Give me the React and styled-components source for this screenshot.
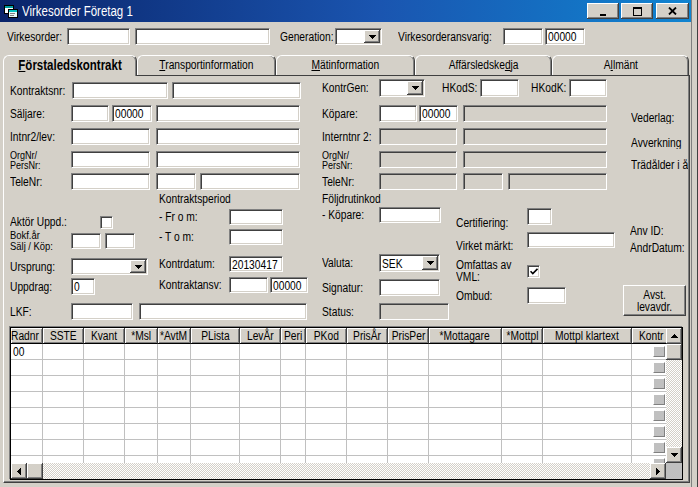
import React from "react";
import styled, { createGlobalStyle } from "styled-components";

const FONT = `"Liberation Sans", Arial, sans-serif`;

const GlobalStyle = createGlobalStyle`
  html, body {
    margin: 0;
    padding: 0;
    background: #d4d0c8;
  }
  body {
    font-family: ${FONT};
    font-size: 12.5px;
    color: #000;
  }
`;

const raised = `
  background: #d4d0c8;
  box-shadow: inset -1px -1px 0 #404040, inset 1px 1px 0 #fff,
    inset -2px -2px 0 #808080, inset 2px 2px 0 #d4d0c8;
`;

// the screen font is a narrow sans, so the text is squeezed horizontally
const Txt = styled.span`
  display: inline-block;
  transform: scaleX(0.82);
  transform-origin: ${(p) => p.$origin || "left"} center;
  white-space: pre;
`;

const Screen = styled.div`
  width: 698px;
  height: 487px;
  display: flex;
  overflow: hidden;
`;

const Window = styled.div`
  width: 691px;
  flex: none;
  border-right: 1px solid #808080;
  display: flex;
  flex-direction: column;
`;

const FrameEdge = styled.div`
  flex: 1;
  border-right: 1px solid #404040;
`;

const TitleBar = styled.div`
  height: 22px;
  flex: none;
  display: flex;
  align-items: center;
  padding: 0 2px 0 3px;
  background: linear-gradient(to right, #0a246a 0%, #1a55b0 55%, #1084d0 100%);
  color: #fff;
  font-size: 14px;
`;

const TitleText = styled.div`
  margin-left: 3px;
  flex: 1;
  white-space: nowrap;
`;

const TitleBtn = styled.div`
  box-sizing: border-box;
  width: ${(p) => p.$w}px;
  height: 16px;
  margin-left: ${(p) => p.$ml || 0}px;
  ${raised}
  display: flex;
  align-items: center;
  justify-content: center;
`;

const MinGlyph = styled.div`
  width: 6px;
  height: 2px;
  background: #000;
  margin-top: 7px;
`;

const MaxGlyph = styled.div`
  box-sizing: border-box;
  width: 9px;
  height: 9px;
  border: 1px solid #000;
  border-top-width: 2px;
`;

const TopBar = styled.div`
  height: 29px;
  flex: none;
  display: flex;
  align-items: center;
  padding-left: 7px;
`;

const TabRow = styled.div`
  position: relative;
  z-index: 1;
  height: 20px;
  margin-top: 4px;
  flex: none;
  display: flex;
  align-items: flex-end;
  padding-left: 3px;
`;

const Tab = styled.div`
  box-sizing: border-box;
  flex: none;
  width: ${(p) => p.$w}px;
  height: ${(p) => (p.$active ? 21 : 20)}px;
  margin-bottom: ${(p) => (p.$active ? -1 : 0)}px;
  border-top: 1px solid #fff;
  border-left: 1px solid #fff;
  border-right: 1px solid #404040;
  border-radius: 6px 6px 0 0;
  box-shadow: inset -1px 0 0 #808080;
  background: #d4d0c8;
  display: flex;
  align-items: center;
  justify-content: center;
  padding-bottom: ${(p) => (p.$active ? 2 : 1)}px;
  font-size: ${(p) => (p.$active ? 14 : 12.5)}px;
  font-weight: ${(p) => (p.$active ? 700 : 400)};
  white-space: nowrap;
`;

const Panel = styled.div`
  flex: 1;
  margin: 0 1px 4px 3px;
  border-top: 1px solid #404040;
  border-left: 1px solid #fff;
  border-right: 1px solid #404040;
  border-bottom: 1px solid #404040;
  box-shadow: inset -1px -1px 0 #808080;
  padding: 3px 0 0 6px;
  display: flex;
  flex-direction: column;
`;

const Form = styled.div`
  display: flex;
  height: 241px;
  flex: none;
`;

const Area = styled.div`
  width: ${(p) => p.$w}px;
  flex: none;
  display: flex;
  flex-direction: column;
  overflow: hidden;
`;

const Lower = styled.div`
  display: flex;
`;

const Col = styled.div`
  width: ${(p) => p.$w}px;
  flex: none;
  display: flex;
  flex-direction: column;
`;

const Row = styled.div`
  display: flex;
  align-items: center;
  flex: none;
  height: ${(p) => p.$h || 17}px;
  margin-top: ${(p) => (p.$mt === undefined ? 6 : p.$mt)}px;
`;

const LabelBox = styled.div`
  flex: none;
  width: ${(p) => (p.$w ? `${p.$w}px` : "auto")};
  margin-left: ${(p) => p.$ml || 0}px;
  padding-top: ${(p) => p.$pt || 0}px;
  font-size: ${(p) => p.$fs || 12.5}px;
  line-height: ${(p) => p.$lh || 14}px;
  white-space: pre;
  overflow: hidden;
`;

const Label = ({ children, ...rest }) => (
  <LabelBox {...rest}>
    <Txt>{children}</Txt>
  </LabelBox>
);

const Heading = styled.div`
  height: 12px;
  line-height: 12px;
  margin-top: ${(p) => p.$mt || 0}px;
  white-space: nowrap;
`;

const FieldBox = styled.div`
  box-sizing: border-box;
  flex: none;
  width: ${(p) => p.$w}px;
  height: ${(p) => p.$h || 17}px;
  margin-left: ${(p) => p.$ml || 0}px;
  background: ${(p) => (p.$off ? "#d4d0c8" : "#fff")};
  border-top: 1px solid #808080;
  border-left: 1px solid #808080;
  border-right: 1px solid #fff;
  border-bottom: 1px solid #fff;
  box-shadow: inset 1px 1px 0 #404040, inset -1px -1px 0 #d4d0c8;
  padding: 1px 1px 0 2px;
  display: flex;
  align-items: center;
  overflow: hidden;
  white-space: nowrap;
`;

const Field = ({ children, ...rest }) => (
  <FieldBox {...rest}>{children != null && <Txt>{children}</Txt>}</FieldBox>
);

const FieldText = styled.span`
  flex: 1;
`;

const DropBtn = styled.div`
  box-sizing: border-box;
  flex: none;
  width: 16px;
  height: ${(p) => p.$h}px;
  margin-top: -1px;
  ${raised}
  display: flex;
  align-items: center;
  justify-content: center;
`;

const Check = styled.div`
  box-sizing: border-box;
  flex: none;
  width: 13px;
  height: 13px;
  background: #fff;
  border-top: 1px solid #808080;
  border-left: 1px solid #808080;
  border-right: 1px solid #fff;
  border-bottom: 1px solid #fff;
  box-shadow: inset 1px 1px 0 #404040, inset -1px -1px 0 #d4d0c8;
  display: flex;
  align-items: center;
  justify-content: center;
`;

const SideText = styled.div`
  height: 12px;
  line-height: 12px;
  margin-top: ${(p) => p.$mt}px;
  padding-left: ${(p) => p.$pl || 8}px;
  white-space: nowrap;
  overflow: hidden;
`;

const PushBtn = styled.div`
  box-sizing: border-box;
  width: 63px;
  height: 31px;
  margin-top: ${(p) => p.$mt}px;
  background: #d4d0c8;
  border-top: 1px solid #fff;
  border-left: 1px solid #fff;
  border-right: 1px solid #404040;
  border-bottom: 1px solid #404040;
  box-shadow: inset -1px -1px 0 #808080;
  display: flex;
  align-items: center;
  justify-content: center;
  text-align: center;
  line-height: 12px;
`;

/* grid */

const GridBox = styled.div`
  box-sizing: border-box;
  width: 673px;
  height: 153px;
  margin-top: 7px;
  border: 1px solid #000;
  box-shadow: -1px -1px 0 #808080;
  display: flex;
  flex-direction: column;
  background: #fff;
`;

const GridMain = styled.div`
  display: flex;
  height: 135px;
  flex: none;
`;

const Viewport = styled.div`
  flex: 1;
  overflow: hidden;
  display: flex;
  flex-direction: column;
`;

const GridRow = styled.div`
  display: flex;
  flex: none;
  height: 16px;
`;

const HeadCell = styled.div`
  box-sizing: border-box;
  flex: none;
  width: ${(p) => p.$w}px;
  height: 16px;
  background: #d4d0c8;
  border-right: 1px solid #404040;
  border-bottom: 1px solid #000;
  box-shadow: inset 1px 1px 0 #fff, inset -1px -1px 0 #808080;
  display: flex;
  align-items: center;
  justify-content: ${(p) => (p.$align === "left" ? "flex-start" : "center")};
  padding-left: ${(p) => p.$pl || 0}px;
  white-space: nowrap;
  overflow: hidden;
`;

const Cell = styled.div`
  box-sizing: border-box;
  flex: none;
  width: ${(p) => p.$w}px;
  height: 16px;
  border-right: 1px solid #c0c0c0;
  border-bottom: 1px solid #c0c0c0;
  padding-left: 2px;
  white-space: nowrap;
  overflow: hidden;
  display: flex;
  align-items: center;
`;

const Mini = styled.div`
  box-sizing: border-box;
  width: 12px;
  height: 11px;
  background: #c0c0c0;
  border-top: 1px solid #fff;
  border-left: 1px solid #fff;
  border-right: 1px solid #808080;
  border-bottom: 1px solid #808080;
  margin-left: 19px;
`;

const VScroll = styled.div`
  width: 16px;
  flex: none;
  display: flex;
  flex-direction: column;
`;

const HScroll = styled.div`
  height: 16px;
  flex: none;
  display: flex;
`;

const ScrollBtn = styled.div`
  box-sizing: border-box;
  width: 16px;
  height: 16px;
  flex: none;
  ${raised}
  display: flex;
  align-items: center;
  justify-content: center;
`;

const Track = styled.div`
  flex: 1;
  background: repeating-conic-gradient(#d4d0c8 0 25%, #fff 0 50%) 0 0 / 2px 2px;
`;

const Corner = styled.div`
  width: 16px;
  height: 16px;
  flex: none;
  background: #c0c0c0;
`;

/* glyphs */

const Down = () => (
  <svg width="7" height="4" viewBox="0 0 7 4">
    <path d="M0 0h7v1h-1v1h-1v1h-1v1h-1v-1h-1v-1h-1v-1h-1z" fill="#000" />
  </svg>
);
const Up = () => (
  <svg width="7" height="4" viewBox="0 0 7 4">
    <path d="M3 0h1v1h1v1h1v1h1v1h-7v-1h1v-1h1v-1h1z" fill="#000" />
  </svg>
);
const LeftArrow = () => (
  <svg width="4" height="7" viewBox="0 0 4 7">
    <path d="M3 0h1v7h-1v-1h-1v-1h-1v-1h-1v-1h1v-1h1v-1h1z" fill="#000" />
  </svg>
);
const RightArrow = () => (
  <svg width="4" height="7" viewBox="0 0 4 7">
    <path d="M0 0h1v1h1v1h1v1h1v1h-1v1h-1v1h-1v1h-1z" fill="#000" />
  </svg>
);
const CloseGlyph = () => (
  <svg width="9" height="8" viewBox="0 0 9 8">
    <path d="M1 0.5L8 7.5M8 0.5L1 7.5" stroke="#000" strokeWidth="1.8" />
  </svg>
);
const Tick = () => (
  <svg width="8" height="7" viewBox="0 0 8 7">
    <path d="M0.5 3.2L2.8 5.6L7.5 0.8" stroke="#000" strokeWidth="1.6" fill="none" />
  </svg>
);
const AppIcon = () => (
  <svg width="16" height="16" viewBox="0 0 16 16">
    <rect x="1.5" y="2.5" width="9" height="8" fill="#fff" stroke="#000" />
    <rect x="2" y="3" width="8" height="2" fill="#00a0a0" />
    <rect x="5.5" y="6.5" width="9" height="8" fill="#e8f8f8" stroke="#000" />
    <rect x="6" y="7" width="8" height="2" fill="#00c0c0" />
    <rect x="7" y="10" width="5" height="1" fill="#808080" />
    <rect x="7" y="12" width="4" height="1" fill="#808080" />
  </svg>
);

const Combo = ({ w, h = 17, ml, children }) => (
  <FieldBox $w={w} $h={h} $ml={ml}>
    <FieldText>{children && <Txt>{children}</Txt>}</FieldText>
    <DropBtn $h={h - 4}>
      <Down />
    </DropBtn>
  </FieldBox>
);

const columns = [
  { name: "Radnr", w: 32, align: "left" },
  { name: "SSTE", w: 41 },
  { name: "Kvant", w: 41 },
  { name: "*Msl", w: 33 },
  { name: "*AvtM", w: 33 },
  { name: "PLista", w: 49 },
  { name: "LevÅr", w: 41 },
  { name: "Peri", w: 25 },
  { name: "PKod", w: 41 },
  { name: "PrisÅr", w: 41 },
  { name: "PrisPer", w: 41 },
  { name: "*Mottagare", w: 73 },
  { name: "*Mottpl", w: 41 },
  { name: "Mottpl klartext", w: 89 },
  { name: "Kontr", w: 54, align: "left", pl: 7 },
];

const rows = ["00", "", "", "", "", "", "", ""];

const tabs = [
  { w: 134, label: <><u>F</u>örstaledskontrakt</>, active: true },
  { w: 139, label: <><u>T</u>ransportinformation</> },
  { w: 139, label: <><u>M</u>ätinformation</> },
  { w: 137, label: <>Affärsledske<u>d</u>ja</> },
  { w: 137, label: <>A<u>l</u>lmänt</> },
];

export default function App() {
  return (
    <>
      <GlobalStyle />
      <Screen>
        <Window>
          <TitleBar>
            <AppIcon />
            <TitleText>
              <Txt>Virkesorder Företag 1</Txt>
            </TitleText>
            <TitleBtn $w={32}>
              <MinGlyph />
            </TitleBtn>
            <TitleBtn $w={32} $ml={2}>
              <MaxGlyph />
            </TitleBtn>
            <TitleBtn $w={33} $ml={3}>
              <CloseGlyph />
            </TitleBtn>
          </TitleBar>

          <TopBar>
            <Label $w={60}>Virkesorder:</Label>
            <Field $w={63} />
            <Field $w={135} $ml={5} />
            <Label $w={55} $ml={10}>Generation:</Label>
            <Combo w={47} />
            <Label $w={105} $ml={16}>Virkesorderansvarig:</Label>
            <Field $w={40} />
            <Field $w={40} $ml={2}>00000</Field>
          </TopBar>

          <TabRow>
            {tabs.map((t, i) => (
              <Tab key={i} $w={t.w} $active={t.active}>
                <Txt $origin="center">{t.label}</Txt>
              </Tab>
            ))}
          </TabRow>

          <Panel>
            <Form>
              <Area $w={312}>
                <Row $mt={3}>
                  <Label $w={62}>Kontraktsnr:</Label>
                  <Field $w={96} />
                  <Field $w={129} $ml={4} />
                </Row>
                <Row>
                  <Label $w={61}>Säljare:</Label>
                  <Field $w={38} />
                  <Field $w={40} $ml={3}>00000</Field>
                  <Field $w={144} $ml={4} />
                </Row>
                <Row>
                  <Label $w={61}>Intnr2/lev:</Label>
                  <Field $w={79} />
                  <Field $w={144} $ml={6} />
                </Row>
                <Row>
                  <Label $w={61} $fs={11} $lh={10}>{"OrgNr/\nPersNr:"}</Label>
                  <Field $w={79} />
                  <Field $w={144} $ml={6} />
                </Row>
                <Row $mt={5}>
                  <Label $w={61}>TeleNr:</Label>
                  <Field $w={79} />
                  <Field $w={40} $ml={6} />
                  <Field $w={100} $ml={4} />
                </Row>
                <Lower>
                  <Col $w={149}>
                    <Row $h={12} $mt={26}>
                      <Label $w={90}>Aktör Uppd.:</Label>
                      <Check />
                    </Row>
                    <Row $h={23} $mt={1}>
                      <Label $w={61} $fs={11.5} $lh={11}>{"Bokf.år\nSälj / Köp:"}</Label>
                      <Field $w={30} $h={16} />
                      <Field $w={30} $h={16} $ml={4} />
                    </Row>
                    <Row $mt={6}>
                      <Label $w={61}>Ursprung:</Label>
                      <Combo w={77} />
                    </Row>
                    <Row $mt={3}>
                      <Label $w={61}>Uppdrag:</Label>
                      <Field $w={24}>0</Field>
                    </Row>
                  </Col>
                  <Col $w={153}>
                    <Heading $mt={3}>
                      <Txt>Kontraktsperiod</Txt>
                    </Heading>
                    <Row $h={16} $mt={4}>
                      <Label $w={70}>- Fr o m:</Label>
                      <Field $w={54} $h={16} />
                    </Row>
                    <Row $h={16} $mt={4}>
                      <Label $w={70}>- T o m:</Label>
                      <Field $w={54} $h={16} />
                    </Row>
                    <Row $h={16} $mt={11}>
                      <Label $w={70}>Kontrdatum:</Label>
                      <Field $w={54} $h={16}>20130417</Field>
                    </Row>
                    <Row $h={16} $mt={5}>
                      <Label $w={70}>Kontraktansv:</Label>
                      <Field $w={39} $h={16} />
                      <Field $w={38} $h={16} $ml={2}>00000</Field>
                    </Row>
                  </Col>
                </Lower>
                <Row $mt={8}>
                  <Label $w={61}>LKF:</Label>
                  <Field $w={62} />
                  <Field $w={168} $ml={6} />
                </Row>
              </Area>

              <Area $w={301}>
                <Row $h={18} $mt={0}>
                  <Label $w={57}>KontrGen:</Label>
                  <Combo w={46} h={18} />
                  <Label $w={38} $ml={17}>HKodS:</Label>
                  <Field $w={39} $h={18} />
                  <Label $w={38} $ml={12}>HKodK:</Label>
                  <Field $w={38} $h={18} />
                </Row>
                <Row $mt={8}>
                  <Label $w={57}>Köpare:</Label>
                  <Field $w={38} />
                  <Field $w={39} $ml={2}>00000</Field>
                  <Field $w={144} $ml={5} $off />
                </Row>
                <Row>
                  <Label $w={57}>Interntnr 2:</Label>
                  <Field $w={78} $off />
                  <Field $w={144} $ml={6} $off />
                </Row>
                <Row>
                  <Label $w={57} $fs={11} $lh={10}>{"OrgNr/\nPersNr:"}</Label>
                  <Field $w={78} $off />
                  <Field $w={144} $ml={6} $off />
                </Row>
                <Row $mt={5}>
                  <Label $w={57}>TeleNr:</Label>
                  <Field $w={78} $off />
                  <Field $w={40} $ml={6} $off />
                  <Field $w={99} $ml={5} $off />
                </Row>
                <Lower>
                  <Col $w={134}>
                    <Heading $mt={3}>
                      <Txt>Följdrutinkod</Txt>
                    </Heading>
                    <Row $h={16} $mt={2}>
                      <Label $w={57}>- Köpare:</Label>
                      <Field $w={62} $h={16} />
                    </Row>
                    <Row $h={18} $mt={31}>
                      <Label $w={57}>Valuta:</Label>
                      <Combo w={61} h={18}>SEK</Combo>
                    </Row>
                    <Row $mt={7}>
                      <Label $w={57}>Signatur:</Label>
                      <Field $w={61} />
                    </Row>
                    <Row $mt={7}>
                      <Label $w={57}>Status:</Label>
                      <Field $w={70} $off />
                    </Row>
                  </Col>
                  <Col $w={167}>
                    <Row $mt={18}>
                      <Label $w={71} $pt={12}>Certifiering:</Label>
                      <Field $w={25} />
                    </Row>
                    <Row $h={16} $mt={7}>
                      <Label $w={71} $pt={12}>Virket märkt:</Label>
                      <Field $w={88} $h={16} />
                    </Row>
                    <Row $h={24} $mt={11}>
                      <Label $w={71} $lh={12}>{"Omfattas av\nVML:"}</Label>
                      <Check>
                        <Tick />
                      </Check>
                    </Row>
                    <Row $mt={4}>
                      <Label $w={71}>Ombud:</Label>
                      <Field $w={39} />
                    </Row>
                  </Col>
                </Lower>
              </Area>

              <Area $w={65}>
                <SideText $mt={33}>
                  <Txt>Vederlag:</Txt>
                </SideText>
                <SideText $mt={13}>
                  <Txt>Avverkning</Txt>
                </SideText>
                <SideText $mt={10}>
                  <Txt>Trädålder i år</Txt>
                </SideText>
                <SideText $mt={54} $pl={7}>
                  <Txt>Anv ID:</Txt>
                </SideText>
                <SideText $mt={5} $pl={7}>
                  <Txt>ÄndrDatum:</Txt>
                </SideText>
                <PushBtn $mt={31}>
                  <Txt $origin="center">{"Avst.\nlevavdr."}</Txt>
                </PushBtn>
              </Area>
            </Form>

            <GridBox>
              <GridMain>
                <Viewport>
                  <GridRow>
                    {columns.map((c) => (
                      <HeadCell key={c.name} $w={c.w} $align={c.align} $pl={c.pl}>
                        <Txt $origin={c.align === "left" ? "left" : "center"}>{c.name}</Txt>
                      </HeadCell>
                    ))}
                  </GridRow>
                  {rows.map((first, r) => (
                    <GridRow key={r}>
                      {columns.map((c, i) => (
                        <Cell key={c.name} $w={c.w}>
                          {i === 0 && first ? <Txt>{first}</Txt> : null}
                          {c.name === "Kontr" ? <Mini /> : null}
                        </Cell>
                      ))}
                    </GridRow>
                  ))}
                </Viewport>
                <VScroll>
                  <ScrollBtn>
                    <Up />
                  </ScrollBtn>
                  <ScrollBtn />
                  <Track />
                  <ScrollBtn>
                    <Down />
                  </ScrollBtn>
                </VScroll>
              </GridMain>
              <HScroll>
                <ScrollBtn>
                  <LeftArrow />
                </ScrollBtn>
                <ScrollBtn />
                <Track />
                <ScrollBtn>
                  <RightArrow />
                </ScrollBtn>
                <Corner />
              </HScroll>
            </GridBox>
          </Panel>
        </Window>
        <FrameEdge />
      </Screen>
    </>
  );
}
